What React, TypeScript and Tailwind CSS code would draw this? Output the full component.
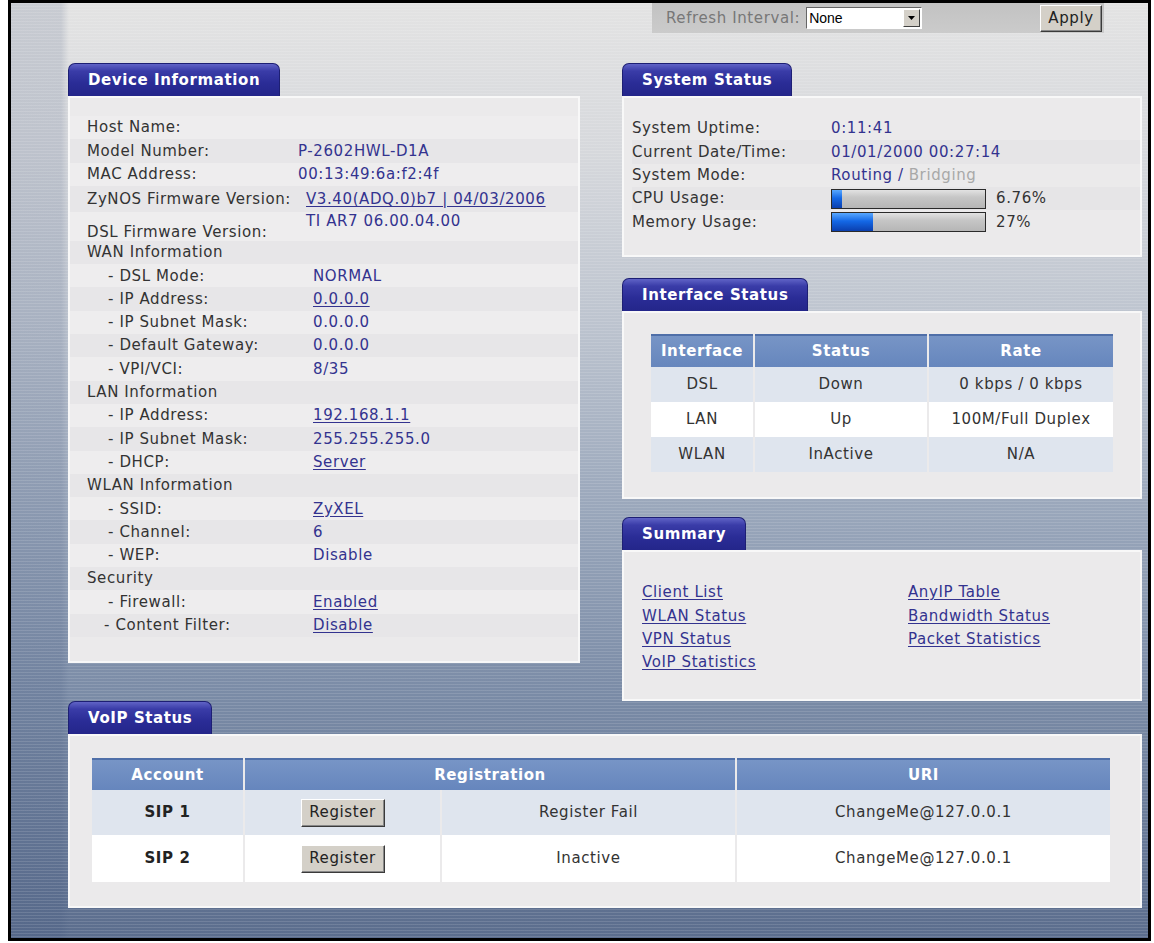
import React from 'react';

interface InfoRow {
  label: string;
  value?: string;
  link?: boolean;
  sub?: boolean;
}

const wanRows: InfoRow[] = [
  { label: 'WAN Information' },
  { label: '- DSL Mode:', value: 'NORMAL', sub: true },
  { label: '- IP Address:', value: '0.0.0.0', link: true, sub: true },
  { label: '- IP Subnet Mask:', value: '0.0.0.0', sub: true },
  { label: '- Default Gateway:', value: '0.0.0.0', sub: true },
  { label: '- VPI/VCI:', value: '8/35', sub: true },
  { label: 'LAN Information' },
  { label: '- IP Address:', value: '192.168.1.1', link: true, sub: true },
  { label: '- IP Subnet Mask:', value: '255.255.255.0', sub: true },
  { label: '- DHCP:', value: 'Server', link: true, sub: true },
  { label: 'WLAN Information' },
  { label: '- SSID:', value: 'ZyXEL', link: true, sub: true },
  { label: '- Channel:', value: '6', sub: true },
  { label: '- WEP:', value: 'Disable', sub: true },
  { label: 'Security' },
  { label: '- Firewall:', value: 'Enabled', link: true, sub: true },
];

const interfaces = [
  { name: 'DSL', status: 'Down', rate: '0 kbps / 0 kbps' },
  { name: 'LAN', status: 'Up', rate: '100M/Full Duplex' },
  { name: 'WLAN', status: 'InActive', rate: 'N/A' },
];

const summaryLinks = [
  ['Client List', 'AnyIP Table'],
  ['WLAN Status', 'Bandwidth Status'],
  ['VPN Status', 'Packet Statistics'],
  ['VoIP Statistics', ''],
];

const sipAccounts = [
  { name: 'SIP 1', state: 'Register Fail' },
  { name: 'SIP 2', state: 'Inactive' },
];

function Tab({ title }: { title: string }) {
  return (
    <div className="inline-flex h-[33px] items-center rounded-t-[7px] border border-b-0 border-[#1d1f74] bg-[linear-gradient(180deg,#6063c6_0%,#3a3ca8_22%,#2a2c96_60%,#24268a_100%)] px-[19px] text-[15px] font-bold text-white">
      {title}
    </div>
  );
}

function Panel({ className, children }: { className: string; children?: React.ReactNode }) {
  return <div className={`border-2 border-[#f8f8f8] bg-[#ebeaeb] ${className}`}>{children}</div>;
}

function Value({ text, link }: { text: string; link?: boolean }) {
  return <span className={`text-[#33338f] ${link ? 'underline underline-offset-2' : ''}`}>{text}</span>;
}

function RaisedButton({ label, className }: { label: string; className: string }) {
  return (
    <button
      type="button"
      className={`border border-t-white border-l-white border-r-[#3a3a3a] border-b-[#3a3a3a] bg-[#d4d0c8] text-[15px] text-[#222] shadow-[inset_-1px_-1px_0_#888] ${className}`}
    >
      {label}
    </button>
  );
}

function UsageBar({ percent }: { percent: number }) {
  return (
    <div className="h-[20px] w-[155px] border border-[#2a2a2a] bg-[linear-gradient(180deg,#e2e2e2_0%,#c6c6c6_40%,#b6b6b6_100%)]">
      <div
        className="h-full bg-[linear-gradient(180deg,#58a8ff_0%,#1468e6_45%,#0b3fae_100%)]"
        style={{ width: `${percent}%` }}
      />
    </div>
  );
}

function DeviceInformation() {
  return (
    <div className="flex flex-col">
      <div>
        <Tab title="Device Information" />
      </div>
      <Panel className="h-[567px] pt-[18px] text-[#333]">
        <div className="flex h-[23.3px] items-center bg-[#eeedee] pl-[17px]">Host Name:</div>
        <div className="flex h-[23.3px] items-center bg-[#e7e6e8] pl-[17px]">
          <span className="w-[211px]">Model Number:</span>
          <Value text="P-2602HWL-D1A" />
        </div>
        <div className="flex h-[23.3px] items-center bg-[#eeedee] pl-[17px]">
          <span className="w-[211px]">MAC Address:</span>
          <Value text="00:13:49:6a:f2:4f" />
        </div>
        <div className="flex h-[26px] items-center bg-[#e7e6e8] pl-[17px]">
          <span className="w-[219px]">ZyNOS Firmware Version:</span>
          <Value text="V3.40(ADQ.0)b7 | 04/03/2006" link />
        </div>
        <div className="flex h-[29px] bg-[#eeedee] pl-[17px]">
          <span className="w-[219px] self-end leading-[17px]">DSL Firmware Version:</span>
          <span className="self-start leading-[18px]">
            <Value text="TI AR7 06.00.04.00" />
          </span>
        </div>
        {wanRows.map((row, i) => (
          <div
            key={i}
            className={`flex h-[23.3px] items-center ${i % 2 === 0 ? 'bg-[#e7e6e8]' : 'bg-[#eeedee]'} ${row.sub ? 'pl-[38px]' : 'pl-[17px]'}`}
          >
            <span className={row.sub ? 'w-[205px]' : ''}>{row.label}</span>
            {row.value && <Value text={row.value} link={row.link} />}
          </div>
        ))}
        <div className="flex h-[23.3px] items-center bg-[#e7e6e8] pl-[34px]">
          <span className="w-[209px]">- Content Filter:</span>
          <Value text="Disable" link />
        </div>
      </Panel>
    </div>
  );
}

function SystemStatus() {
  return (
    <div className="flex flex-col">
      <div>
        <Tab title="System Status" />
      </div>
      <Panel className="h-[161px] pl-[8px] pt-[19px] text-[#333]">
        <div className="flex h-[23.3px] items-center">
          <span className="w-[199px]">System Uptime:</span>
          <Value text="0:11:41" />
        </div>
        <div className="flex h-[23.3px] items-center bg-[#e6e5e7]">
          <span className="w-[199px]">Current Date/Time:</span>
          <Value text="01/01/2000 00:27:14" />
        </div>
        <div className="flex h-[23.3px] items-center">
          <span className="w-[199px]">System Mode:</span>
          <span className="text-[#33338f]">Routing / </span>
          <span className="ml-[5px] text-[#a8a8a8]">Bridging</span>
        </div>
        <div className="flex h-[23.3px] items-center bg-[#e6e5e7]">
          <span className="w-[199px]">CPU Usage:</span>
          <UsageBar percent={6.76} />
          <span className="ml-[10px]">6.76%</span>
        </div>
        <div className="flex h-[23.3px] items-center">
          <span className="w-[199px]">Memory Usage:</span>
          <UsageBar percent={27} />
          <span className="ml-[10px]">27%</span>
        </div>
      </Panel>
    </div>
  );
}

function InterfaceStatus() {
  const head = 'flex h-[33px] items-center justify-center border-t-2 border-[#4f6fa8] bg-[linear-gradient(180deg,#7795c6,#6686bd)] font-bold text-white';
  return (
    <div className="mt-[21px] flex flex-col">
      <div>
        <Tab title="Interface Status" />
      </div>
      <Panel className="h-[188px] px-[27px] pt-[21px]">
        <div className="grid grid-cols-[102px_172px_1fr] gap-x-[2px] text-center">
          <div className={head}>Interface</div>
          <div className={head}>Status</div>
          <div className={head}>Rate</div>
          {interfaces.map((item, i) => {
            const bg = i % 2 === 0 ? 'bg-[#dfe5ee]' : 'bg-white';
            return (
              <React.Fragment key={item.name}>
                <div className={`flex h-[35px] items-center justify-center text-[#333] ${bg}`}>{item.name}</div>
                <div className={`flex h-[35px] items-center justify-center text-[#333] ${bg}`}>{item.status}</div>
                <div className={`flex h-[35px] items-center justify-center text-[#333] ${bg}`}>{item.rate}</div>
              </React.Fragment>
            );
          })}
        </div>
      </Panel>
    </div>
  );
}

function Summary() {
  return (
    <div className="mt-[18px] flex flex-col">
      <div>
        <Tab title="Summary" />
      </div>
      <Panel className="h-[151px] pl-[18px] pt-[29px]">
        {summaryLinks.map(([left, right], i) => (
          <div key={i} className="flex h-[23.3px] items-center">
            <span className="w-[266px]">
              <Value text={left} link />
            </span>
            {right && <Value text={right} link />}
          </div>
        ))}
      </Panel>
    </div>
  );
}

function VoipStatus() {
  const head = 'flex h-[32px] items-center justify-center border-t-2 border-[#4f6fa8] bg-[linear-gradient(180deg,#7795c6,#6686bd)] font-bold text-white';
  return (
    <div className="ml-[57px] flex w-[1074px] flex-col">
      <div>
        <Tab title="VoIP Status" />
      </div>
      <Panel className="h-[174px] pl-[22px] pt-[22px]">
        <div className="grid w-[1018px] grid-cols-[151px_195px_293px_1fr] gap-x-[2px] text-center">
          <div className={head}>Account</div>
          <div className={`${head} col-span-2`}>Registration</div>
          <div className={head}>URI</div>
          {sipAccounts.map((sip, i) => {
            const bg = i === 0 ? 'bg-[#dfe5ee]' : 'bg-white';
            const h = i === 0 ? 'h-[45px]' : 'h-[47px]';
            return (
              <React.Fragment key={sip.name}>
                <div className={`flex items-center justify-center font-bold text-[#222] ${h} ${bg}`}>{sip.name}</div>
                <div className={`flex items-center justify-center ${h} ${bg}`}>
                  <RaisedButton label="Register" className="h-[28px] w-[84px]" />
                </div>
                <div className={`flex items-center justify-center text-[#333] ${h} ${bg}`}>{sip.state}</div>
                <div className={`flex items-center justify-center text-[#333] ${h} ${bg}`}>ChangeMe@127.0.0.1</div>
              </React.Fragment>
            );
          })}
        </div>
      </Panel>
    </div>
  );
}

export default function App() {
  return (
    <div className="min-h-screen bg-white font-[family-name:'DejaVu_Sans',Verdana,sans-serif] text-[15px] tracking-[0.6px]">
      <div className="ml-[8px] h-[941px] w-[1143px] border-[3px] border-black bg-[image:repeating-linear-gradient(180deg,rgba(255,255,255,0.12)_0px,rgba(255,255,255,0.12)_1px,transparent_1px,transparent_3px),linear-gradient(90deg,rgba(60,80,120,0.16)_0px,rgba(60,80,120,0.16)_50px,transparent_58px),linear-gradient(180deg,#e3e3e3_0%,#d6d8dc_16%,#bdc4cf_34%,#9aa7bb_54%,#7a8ba6_74%,#5b6d8d_100%)]">
        {/* refresh bar */}
        <div className="flex h-[30px] justify-end pr-[44px]">
          <div className="flex w-[452px] items-center bg-[linear-gradient(180deg,#c2c2c2,#cbcbcb)] pl-[14px] pr-[2px]">
            <span className="text-[#777]">Refresh Interval:</span>
            <div className="ml-[6px] flex h-[22px] w-[116px] items-center justify-between border border-t-[#666] border-l-[#666] border-r-white border-b-white bg-white pl-[2px] pr-px font-[family-name:'Liberation_Sans',Arial,sans-serif] text-[14px] tracking-normal text-black">
              <span>None</span>
              <span className="flex h-[18px] w-[17px] items-center justify-center border border-t-white border-l-white border-r-[#404040] border-b-[#404040] bg-[#d4d0c8]">
                <svg width="7" height="4" viewBox="0 0 7 4">
                  <polygon points="0,0 7,0 3.5,4" fill="#000" />
                </svg>
              </span>
            </div>
            <div className="flex-1" />
            <RaisedButton label="Apply" className="h-[27px] w-[62px]" />
          </div>
        </div>

        <div className="ml-[57px] mt-[30px] grid grid-cols-[512px_520px] items-start gap-x-[42px]">
          <DeviceInformation />
          <div className="flex flex-col">
            <SystemStatus />
            <InterfaceStatus />
            <Summary />
          </div>
        </div>

        <VoipStatus />
      </div>
    </div>
  );
}
